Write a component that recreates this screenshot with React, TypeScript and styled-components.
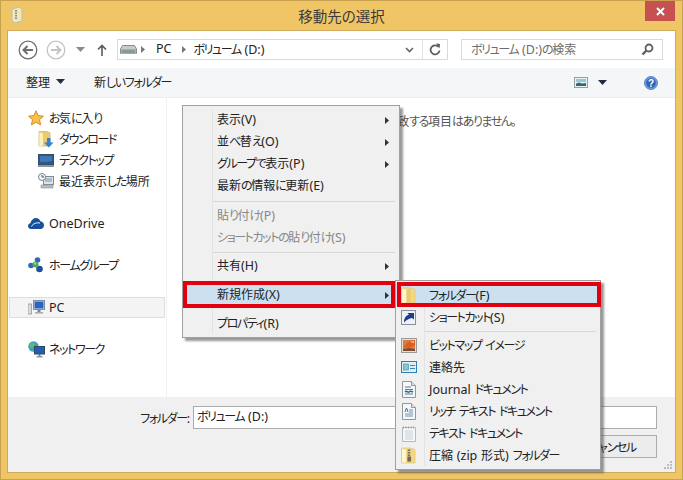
import React from 'react'
import styled, { createGlobalStyle } from 'styled-components'

const GlobalStyle = createGlobalStyle`
  html, body { margin: 0; padding: 0; background: #f0c566; }
  body {
    font-family: "Noto Sans", "Noto Sans CJK JP", sans-serif;
    font-size: 12px;
    color: #222;
    font-feature-settings: "palt";
    word-spacing: 0.5px;
  }
  #root { width: 683px; height: 480px; overflow: hidden; }
  svg { display: block; flex: none; }
`

/* Meiryo UI has narrow kana and a wider latin, so runs get their own tracking */
const Kana = styled.span`
  letter-spacing: -1.4px;
`

const Latin = styled.span`
  font-size: 12.5px;
`

const Jp = ({ children }: { children: string }) => (
  <span>
    {children.split(/([\u3040-\u30ff]+|[ -~]+)/).filter(Boolean).map((run, i) => {
      if (/^[\u3040-\u30ff]/.test(run)) return <Kana key={i}>{run}</Kana>
      if (/^[ -~]/.test(run)) return <Latin key={i}>{run}</Latin>
      return run
    })}
  </span>
)

/* ---------- icons ---------- */

const Back = ({ faded }: { faded?: boolean }) => {
  const c = faded ? '#c4c4c4' : '#6e6e6e'
  return (
    <svg width="20" height="20" viewBox="0 0 20 20" fill="none" stroke={c}>
      <circle cx="10" cy="10" r="8.8" strokeWidth="1.3" fill="#fff" />
      {faded ? (
        <path d="M5 10h9M10.5 6l4 4-4 4" strokeWidth="2" />
      ) : (
        <path d="M15 10H6M9.5 6l-4 4 4 4" strokeWidth="2" />
      )}
    </svg>
  )
}

const Caret = ({ color = '#6e6e6e' }: { color?: string }) => (
  <svg width="9" height="5" viewBox="0 0 9 5"><path d="M0 0h9L4.5 5z" fill={color} /></svg>
)

const UpArrow = () => (
  <svg width="10" height="12" viewBox="0 0 10 12" fill="none" stroke="#5a5a5a" strokeWidth="1.6">
    <path d="M5 12V1.500M1 5.500L5 1.500l4 4" />
  </svg>
)

const Drive = () => (
  <svg width="17" height="9" viewBox="0 0 17 9">
    <path d="M2.500.500h12L16.500 4v4a1 1 0 0 1-1 1h-14a1 1 0 0 1-1-1V4z" fill="#c6cccc" stroke="#858c8c" />
    <rect x="1.500" y="4.500" width="14" height="3.500" fill="#8f9696" />
    <rect x="12" y="5.500" width="2.500" height="1.500" fill="#62c45a" />
  </svg>
)

const Crumb = () => (
  <svg width="4" height="7" viewBox="0 0 4 7"><path d="M0 0l4 3.500L0 7z" fill="#777" /></svg>
)

const Chevron = () => (
  <svg width="9" height="6" viewBox="0 0 9 6" fill="none" stroke="#666" strokeWidth="1.6"><path d="M1 1l3.500 3.500L8 1" /></svg>
)

const Refresh = () => (
  <svg width="12" height="13" viewBox="0 0 12 13" fill="none" stroke="#5e5e5e" strokeWidth="1.8">
    <path d="M9.500 4a4.500 4.500 0 1 0 1 3.500" />
    <path d="M7 0.500l4 .5-.5 4.500z" fill="#5e5e5e" stroke="none" />
  </svg>
)

const SearchIcon = () => (
  <svg width="13" height="13" viewBox="0 0 13 13" fill="none" stroke="#5f5f5f">
    <circle cx="8" cy="5" r="3.500" strokeWidth="1.8" />
    <path d="M5.500 7.500L1.500 11.500" strokeWidth="2.400" />
  </svg>
)

const ViewIcon = () => (
  <svg width="14" height="11" viewBox="0 0 14 11">
    <rect x=".5" y=".5" width="13" height="10" fill="#e8f2f4" stroke="#8fa2ab" />
    <rect x="2" y="2" width="10" height="3" fill="#9cc6da" />
    <path d="M2 9V6.500l3-1 3 1 4-.5V9z" fill="#2f6a6e" />
  </svg>
)

const Help = () => (
  <svg width="14" height="14" viewBox="0 0 14 14">
    <circle cx="7" cy="7" r="6.500" fill="#6f9bd8" stroke="#5f86c0" />
    <circle cx="7" cy="7" r="4.800" fill="#2f63b4" />
    <text x="7" y="10.500" textAnchor="middle" fontSize="10" fontWeight="700" fill="#fff" fontFamily="Liberation Sans">?</text>
  </svg>
)

const AppIcon = () => (
  <svg width="12" height="16" viewBox="0 0 12 16">
    <path d="M1 2l7-2 3 2v12l-7 2-3-2z" fill="#f3e7b4" stroke="#bbb" />
    <path d="M5 3v10" stroke="#8b8b8b" strokeWidth="2" strokeDasharray="1.500 1" />
  </svg>
)

const Star = () => (
  <svg width="16" height="16" viewBox="0 0 16 16">
    <path d="M8 .8l2.200 4.800 5.200.6-3.900 3.500 1.100 5.200L8 12.300 3.400 14.900l1.100-5.200L.6 6.200l5.200-.6z" fill="#f8c24a" stroke="#d88a2c" />
  </svg>
)

const FolderTall = ({ zip }: { zip?: boolean }) => (
  <svg width="15" height="17" viewBox="0 0 15 17">
    <path d="M.5 1h9l4.500 1.500V16H.5z" fill="#f3dc92" stroke="#dcc688" strokeWidth=".8" />
    <path d="M1 1.500v14h4.500V3z" fill="#fdf6cf" />
    <path d="M5.500 3l4-1.500 4 1V15.500h-8z" fill="#ecca6c" />
    <path d="M9.500 1.800V15.500h4V2.600z" fill="#f1d684" />
    {zip && <path d="M8 2.500v8" stroke="#77735f" strokeWidth="2.400" strokeDasharray="1.500 1" />}
    {zip && <rect x="6.500" y="9.500" width="3.500" height="5" fill="#6e6a58" />}
  </svg>
)

const DownloadFolder = () => (
  <svg width="16" height="17" viewBox="0 0 16 17">
    <path d="M1 .5h8l3 1.500V15H1z" fill="#ecca6c" stroke="#cdb67a" strokeWidth=".8" />
    <path d="M1.300 1V15H5V2.500z" fill="#fbf0bc" />
    <path d="M9 7h3.500v4.500H15.500L10.800 16.500 6 11.500h3z" fill="#2f84cf" />
  </svg>
)

const Desktop = () => (
  <svg width="16" height="13" viewBox="0 0 16 13">
    <rect x=".5" y=".5" width="15" height="10" fill="#2a5890" stroke="#3c4c63" />
    <path d="M2 2h12v5c-4 1-8 1-12 1z" fill="#3f77b6" />
    <rect x="0" y="11" width="16" height="2" fill="#8795a5" />
  </svg>
)

const Recent = () => (
  <svg width="16" height="16" viewBox="0 0 16 16">
    <rect x="5.500" y="3.500" width="10" height="8" fill="#dfe4e8" stroke="#7d8a93" />
    <path d="M7 6h7M7 8h7" stroke="#7d96aa" />
    <rect x="3" y="12" width="12" height="3" fill="#b5bcc2" stroke="#8d979e" strokeWidth=".6" />
    <circle cx="4" cy="4" r="3.500" fill="#f7f8f8" stroke="#76838c" />
    <path d="M4 2v2h2" stroke="#4e5b64" fill="none" />
  </svg>
)

const Cloud = () => (
  <svg width="16" height="11" viewBox="0 0 16 11">
    <path d="M3 11C1 11 0 9.500 0 8c0-1.500 1-2.500 2.300-2.800C3.300 2 5.500 0 8 0c2.200 0 3.700 1.300 4.400 3.300C14.500 3.500 16 5 16 7.200 16 9.500 14.500 11 12.500 11z" fill="#17519b" />
    <path d="M3.500 8.500C5 5.500 8 4.300 12 5" stroke="#fff" fill="none" strokeWidth=".9" />
  </svg>
)

const HomeGroup = () => (
  <svg width="16" height="16" viewBox="0 0 16 16">
    <circle cx="9.500" cy="3" r="2.800" fill="#2f69bd" />
    <circle cx="3" cy="8.500" r="2.800" fill="#2f69bd" />
    <circle cx="11.500" cy="12" r="3.300" fill="#214f9e" />
    <circle cx="7.500" cy="7.500" r="3" fill="#4fa84c" />
    <circle cx="7" cy="6.500" r="1.200" fill="#9ed68f" />
  </svg>
)

const Computer = () => (
  <svg width="17" height="15" viewBox="0 0 17 15">
    <rect x="0" y="4" width="3.500" height="10" fill="#d9dde0" stroke="#8e979e" strokeWidth=".8" />
    <rect x="5.500" y=".5" width="11" height="9" fill="#d8e4ee" stroke="#7f8fa0" />
    <rect x="6.500" y="1.500" width="9" height="7" fill="#2a63c0" />
    <rect x="9.500" y="10" width="3" height="2" fill="#79838c" />
    <rect x="7" y="12" width="8" height="1.500" fill="#a0a9b1" />
  </svg>
)

const Network = () => (
  <svg width="17" height="17" viewBox="0 0 17 17">
    <circle cx="5.500" cy="5.500" r="5.200" fill="#3fa0bf" />
    <path d="M1.500 3.500c2-2.500 4-1.500 5-.5s-1 2.500-2 3.500-3 1-3-3z" fill="#62bb6a" />
    <rect x="6.500" y="5.500" width="10" height="7.500" fill="#1f5fb6" stroke="#34465f" />
    <rect x="10.500" y="13" width="2" height="2" fill="#6f7b85" />
    <rect x="8.500" y="15" width="6" height="1.500" fill="#8d98a2" />
  </svg>
)

const Shortcut = () => (
  <svg width="15" height="15" viewBox="0 0 15 15">
    <rect x=".5" y=".5" width="14" height="14" fill="#eef1f6" stroke="#8b9198" />
    <path d="M3 12.500c0-5 2.500-7.500 5-7.500L6.500 3h6.500v6.500L11 8c-3 .5-5.500 2-8 4.500z" fill="#1c3f8c" />
  </svg>
)

const Bitmap = () => (
  <svg width="16" height="15" viewBox="0 0 16 15">
    <rect x=".5" y=".5" width="15" height="14" fill="#e7ddc9" stroke="#9a9a98" />
    <rect x="2" y="2" width="12" height="11" fill="#cf7f4a" />
    <path d="M2 9l5-5 7-2v5l-6 3z" fill="#e25c20" />
    <path d="M2 13v-2l6-1 6 1v2z" fill="#7c4f30" />
    <path d="M9 4l4-1v2z" fill="#f5dc8a" />
  </svg>
)

const Contact = () => (
  <svg width="16" height="12" viewBox="0 0 16 12">
    <rect x=".5" y=".5" width="15" height="11" fill="#dcf0f4" stroke="#2f7fb8" />
    <rect x="2.500" y="3" width="5" height="6" fill="#8cc4d4" stroke="#3f8fb0" strokeWidth=".6" />
    <path d="M9 4.500h5M9 7.500h5" stroke="#3f7fa8" />
  </svg>
)

const Doc = ({ children }: { children?: React.ReactNode }) => (
  <svg width="14" height="17" viewBox="0 0 14 17">
    <path d="M.5.500h9l4 4v12H.5z" fill="#f6f7f8" stroke="#8f989e" />
    <path d="M9.500.500v4h4" fill="#dfe3e6" stroke="#8f989e" />
    {children}
  </svg>
)

const TextDoc = () => (
  <svg width="14" height="17" viewBox="0 0 14 17">
    <path d="M.5 2.500h13v14H.5z" fill="#f6f7f8" stroke="#b4bbc0" />
    <path d="M1.500 1.500v2M4 1.500v2M6.500 1.500v2M9 1.500v2M11.500 1.500v2" stroke="#9aa2a8" />
    <path d="M3 6h8M3 8h8M3 10h8M3 12h8M3 14h8" stroke="#ccd2d6" />
  </svg>
)

/* ---------- window ---------- */

const Win = styled.div`
  box-sizing: border-box;
  width: 683px;
  height: 480px;
  position: relative;
  overflow: hidden;
  background: #f0c566;
  border: 1px solid #c9a24f;
  display: flex;
  flex-direction: column;
`

const TitleBar = styled.div`
  height: 29px;
  display: grid;
  grid-template-columns: 1fr auto 1fr;
  align-items: start;
`

const TitleIcon = styled.div`
  padding: 6px 0 0 10px;
`

const Title = styled.div`
  font-size: 14.5px;
  line-height: 30px;
  color: #3a3a3a;
`

const CloseButton = styled.div`
  justify-self: end;
  margin-right: 7px;
  width: 30px;
  height: 20px;
  background: #c75050;
  color: #fff;
  display: flex;
  align-items: center;
  justify-content: center;
`

const Client = styled.div`
  flex: 1;
  margin: 0 6px 6px;
  border: 1px solid #cdaa5c;
  background: #fff;
  display: flex;
  flex-direction: column;
  min-height: 0;
`

const AddressRow = styled.div`
  height: 37px;
  flex: none;
  display: flex;
  align-items: center;
  padding: 0 12px 0 10px;
`

const NavSlot = styled.div<{ $w: number }>`
  width: ${p => p.$w}px;
  flex: none;
  display: flex;
  justify-content: center;
`

const Field = styled.div`
  box-sizing: border-box;
  height: 21px;
  border: 1px solid #d9d9d9;
  display: flex;
  align-items: center;
`

const AddressBox = styled(Field)`
  width: 331px;
  padding-left: 1px;
`

const CrumbText = styled.span`
  margin: 0 11px 2px 7px;
  white-space: nowrap;
`

const AddressEnd = styled.div`
  margin-left: auto;
  display: flex;
  align-items: center;
  height: 100%;
`

const ChevronSlot = styled.div`
  padding-right: 3px;
  width: 14px;
`

const RefreshSlot = styled.div`
  height: 100%;
  width: 24px;
  border-left: 1px solid #e2e2e2;
  display: flex;
  align-items: center;
  justify-content: center;
`

const SearchBox = styled(Field)`
  width: 202px;
  margin-left: 13px;
  padding: 0 8px 0 9px;
  color: #6d6d6d;
  justify-content: space-between;
`

const SearchText = styled.span`
  margin-bottom: 2px;
`

const Toolbar = styled.div`
  height: 30px;
  flex: none;
  box-sizing: border-box;
  background: #f5f6f7;
  border-bottom: 1px solid #eceded;
  display: flex;
  align-items: center;
  padding: 0 17px 0 18px;
`

const ToolButton = styled.div`
  display: flex;
  align-items: center;
  gap: 6px;
  white-space: nowrap;
  margin-bottom: 2px;
`

const NewFolder = styled(ToolButton)`
  margin-left: 29px;
`

const ToolEnd = styled.div`
  margin-left: auto;
  display: flex;
  align-items: center;
`

const ViewCaret = styled.div`
  margin: 0 37px 0 10px;
`

const Main = styled.div`
  flex: 1;
  min-height: 0;
  display: flex;
`

const NavPane = styled.div`
  width: 158px;
  flex: none;
  border-right: 1px solid #f1f1f1;
  padding-top: 10px;
  display: flex;
  flex-direction: column;
  gap: 21px;
`

const NavGroup = styled.div`
  display: flex;
  flex-direction: column;
`

const NavItem = styled.div<{ $child?: boolean; $selected?: boolean }>`
  box-sizing: border-box;
  height: 21px;
  display: flex;
  align-items: center;
  white-space: nowrap;
  margin-left: 1px;
  width: 156px;
  padding: 0 0 1px ${p => (p.$child ? 28 : 18)}px;
  border: 1px solid ${p => (p.$selected ? '#dddddd' : 'transparent')};
  background: ${p => (p.$selected ? '#f4f4f4' : 'transparent')};
`

const NavIcon = styled.div`
  width: 16px;
  margin-right: 5px;
  display: flex;
  justify-content: center;
`

const Content = styled.div`
  flex: 1;
  padding: 14px 0 0 160px;
`

const Empty = styled.div`
  white-space: nowrap;
  color: #555;
`

const Footer = styled.div`
  height: 75px;
  flex: none;
  background: #f0f0f0;
  position: relative;
  box-sizing: border-box;
  padding: 9px 18px 0 0;
  display: flex;
  flex-direction: column;
  gap: 6px;
`

const FolderRow = styled.div`
  display: flex;
  align-items: center;
  justify-content: flex-end;
`

const FolderLabel = styled.div`
  margin-right: 3px;
`

const FolderInput = styled.div`
  box-sizing: border-box;
  width: 464px;
  height: 23px;
  line-height: 20px;
  padding-left: 3px;
  background: #fff;
  border: 1px solid #ababab;
`

const ButtonRow = styled.div`
  display: flex;
  justify-content: flex-end;
`

const CancelButton = styled.div`
  box-sizing: border-box;
  width: 90px;
  height: 23px;
  background: #ececec;
  border: 1px solid #acacac;
  display: flex;
  align-items: center;
  justify-content: center;
`

const Grip = styled.svg`
  position: absolute;
  right: 2px;
  bottom: 2px;
`

/* ---------- context menus ---------- */

const Menu = styled.div`
  position: absolute;
  box-sizing: border-box;
  background: #f0f0f0;
  border: 1px solid #a0a0a0;
  box-shadow: 3px 3px 2px rgba(70, 70, 70, 0.55);
  padding: 3px 0;
`

const MainMenu = styled(Menu)`
  left: 181px;
  top: 104px;
  width: 218px;
  height: 233px;
  &::before {
    content: '';
    position: absolute;
    left: 29px;
    top: 3px;
    bottom: 3px;
    width: 1px;
    background: #e2e3e3;
  }
`

const SubMenu = styled(Menu)`
  left: 394px;
  top: 279px;
  width: 206px;
  height: 190px;
  &::before {
    content: '';
    position: absolute;
    left: 28px;
    top: 3px;
    bottom: 3px;
    width: 1px;
    background: #e2e3e3;
  }
`

const MenuRow = styled.div<{ $disabled?: boolean; $active?: boolean; $inset: number }>`
  position: relative;
  box-sizing: border-box;
  height: 22px;
  display: flex;
  align-items: center;
  white-space: nowrap;
  padding: 0 0 2px ${p => p.$inset}px;
  color: ${p => (p.$disabled ? '#878787' : '#222')};
  background: ${p => (p.$active ? '#cde0f0' : 'transparent')};
`

const SubRow = styled(MenuRow)`
  padding-bottom: 0;
`

const MenuArrow = styled.svg`
  position: absolute;
  right: 10px;
  top: 8px;
`

const MenuIcon = styled.div`
  position: absolute;
  left: 0;
  top: 0;
  width: 25px;
  height: 22px;
  display: flex;
  align-items: center;
  justify-content: center;
`

const Separator = styled.div<{ $h: number; $start: number; $line?: boolean }>`
  height: ${p => p.$h}px;
  display: flex;
  align-items: center;
  padding-left: ${p => p.$start}px;
  &::after {
    content: '';
    flex: 1;
    height: 1px;
    margin-right: 4px;
    background: ${p => (p.$line === false ? 'transparent' : '#d7d7d7')};
  }
`

const RedMark = styled.span`
  position: absolute;
  border: 4px solid #e2000f;
  z-index: 3;
  pointer-events: none;
`

const MainMark = styled(RedMark)`
  left: 0;
  right: 4px;
  top: -3px;
  bottom: -2px;
`

const SubMark = styled(RedMark)`
  left: 1px;
  right: -1px;
  top: -2px;
  bottom: -1px;
`

const Arrow = () => (
  <MenuArrow width="4" height="7" viewBox="0 0 4 7"><path d="M0 0l4 3.500L0 7z" fill="#333" /></MenuArrow>
)

const favourites = [
  { icon: <DownloadFolder />, label: 'ダウンロード' },
  { icon: <Desktop />, label: 'デスクトップ' },
  { icon: <Recent />, label: '最近表示した場所' },
]

const subItems = [
  { icon: <Bitmap />, label: 'ビットマップ イメージ' },
  { icon: <Contact />, label: '連絡先' },
  {
    icon: (
      <Doc>
        <path d="M3 6h6M3 8.500h8M3 13h8" stroke="#5a7f8e" />
        <path d="M3 11c2-2 3 1 4 0s2-1 4 0" stroke="#1f6f9e" strokeWidth="1.500" fill="none" />
      </Doc>
    ),
    label: 'Journal ドキュメント',
  },
  {
    icon: (
      <Doc>
        <path d="M3 9l1.500-4L6 9" stroke="#3f6f9e" fill="none" />
        <path d="M7 7h4M7 9h4M3 11h8M3 13h8" stroke="#6e93b5" />
      </Doc>
    ),
    label: 'リッチ テキスト ドキュメント',
  },
  { icon: <TextDoc />, label: 'テキスト ドキュメント' },
  { icon: <FolderTall zip />, label: '圧縮 (zip 形式) フォルダー' },
]

export default function App() {
  return (
    <>
      <GlobalStyle />
      <Win>
        <TitleBar>
          <TitleIcon><AppIcon /></TitleIcon>
          <Title>移動先の選択</Title>
          <CloseButton>
            <svg width="9" height="9" viewBox="0 0 9 9" stroke="#fff" strokeWidth="2"><path d="M1 1l7 7M8 1L1 8" /></svg>
          </CloseButton>
        </TitleBar>
        <Client>
          <AddressRow>
            <NavSlot $w={20}><Back /></NavSlot>
            <NavSlot $w={36}><Back faded /></NavSlot>
            <NavSlot $w={12}><Caret color="#8a8a8a" /></NavSlot>
            <NavSlot $w={31}><UpArrow /></NavSlot>
            <AddressBox>
              <NavSlot $w={18}><Drive /></NavSlot>
              <NavSlot $w={12}><Crumb /></NavSlot>
              <CrumbText><Jp>PC</Jp></CrumbText>
              <Crumb />
              <CrumbText><Jp>ボリューム (D:)</Jp></CrumbText>
              <AddressEnd>
                <ChevronSlot><Chevron /></ChevronSlot>
                <RefreshSlot><Refresh /></RefreshSlot>
              </AddressEnd>
            </AddressBox>
            <SearchBox>
              <SearchText><Jp>ボリューム (D:)の検索</Jp></SearchText>
              <SearchIcon />
            </SearchBox>
          </AddressRow>
          <Toolbar>
            <ToolButton>整理 <Caret color="#222c3c" /></ToolButton>
            <NewFolder><Jp>新しいフォルダー</Jp></NewFolder>
            <ToolEnd>
              <ViewIcon />
              <ViewCaret><Caret color="#222c3c" /></ViewCaret>
              <Help />
            </ToolEnd>
          </Toolbar>
          <Main>
            <NavPane>
              <NavGroup>
                <NavItem><NavIcon><Star /></NavIcon><Jp>お気に入り</Jp></NavItem>
                {favourites.map(f => (
                  <NavItem $child key={f.label}><NavIcon>{f.icon}</NavIcon><Jp>{f.label}</Jp></NavItem>
                ))}
              </NavGroup>
              <NavGroup><NavItem><NavIcon><Cloud /></NavIcon><Jp>OneDrive</Jp></NavItem></NavGroup>
              <NavGroup><NavItem><NavIcon><HomeGroup /></NavIcon><Jp>ホームグループ</Jp></NavItem></NavGroup>
              <NavGroup><NavItem $selected><NavIcon><Computer /></NavIcon><Jp>PC</Jp></NavItem></NavGroup>
              <NavGroup><NavItem><NavIcon><Network /></NavIcon><Jp>ネットワーク</Jp></NavItem></NavGroup>
            </NavPane>
            <Content>
              <Empty><Jp>検索条件に一致する項目はありません。</Jp></Empty>
            </Content>
          </Main>
          <Footer>
            <FolderRow>
              <FolderLabel><Jp>フォルダー:</Jp></FolderLabel>
              <FolderInput><Jp>ボリューム (D:)</Jp></FolderInput>
            </FolderRow>
            <ButtonRow>
              <CancelButton><Jp>キャンセル</Jp></CancelButton>
            </ButtonRow>
            <Grip width="9" height="9" viewBox="0 0 9 9" fill="#bdbdbd">
              <rect x="6" y="0" width="2" height="2" />
              <rect x="3" y="3" width="2" height="2" />
              <rect x="6" y="3" width="2" height="2" />
              <rect x="0" y="6" width="2" height="2" />
              <rect x="3" y="6" width="2" height="2" />
              <rect x="6" y="6" width="2" height="2" />
            </Grip>
          </Footer>
        </Client>

        <MainMenu>
          <MenuRow $inset={34}><Jp>表示(V)</Jp><Arrow /></MenuRow>
          <MenuRow $inset={34}><Jp>並べ替え(O)</Jp><Arrow /></MenuRow>
          <MenuRow $inset={34}><Jp>グループで表示(P)</Jp><Arrow /></MenuRow>
          <MenuRow $inset={34}><Jp>最新の情報に更新(E)</Jp></MenuRow>
          <Separator $h={8} $start={30} />
          <MenuRow $inset={34} $disabled><Jp>貼り付け(P)</Jp></MenuRow>
          <MenuRow $inset={34} $disabled><Jp>ショートカットの貼り付け(S)</Jp></MenuRow>
          <Separator $h={6} $start={30} />
          <MenuRow $inset={34}><Jp>共有(H)</Jp><Arrow /></MenuRow>
          <Separator $h={7} $start={30} $line={false} />
          <MenuRow $inset={34} $active><Jp>新規作成(X)</Jp><Arrow /><MainMark /></MenuRow>
          <Separator $h={7} $start={30} $line={false} />
          <MenuRow $inset={34}><Jp>プロパティ(R)</Jp></MenuRow>
        </MainMenu>

        <SubMenu>
          <SubRow $inset={33} $active>
            <MenuIcon><FolderTall /></MenuIcon><Jp>フォルダー(F)</Jp><SubMark />
          </SubRow>
          <SubRow $inset={33}><MenuIcon><Shortcut /></MenuIcon><Jp>ショートカット(S)</Jp></SubRow>
          <Separator $h={6} $start={29} />
          {subItems.map(s => (
            <SubRow $inset={33} key={s.label}><MenuIcon>{s.icon}</MenuIcon><Jp>{s.label}</Jp></SubRow>
          ))}
        </SubMenu>
      </Win>
    </>
  )
}
